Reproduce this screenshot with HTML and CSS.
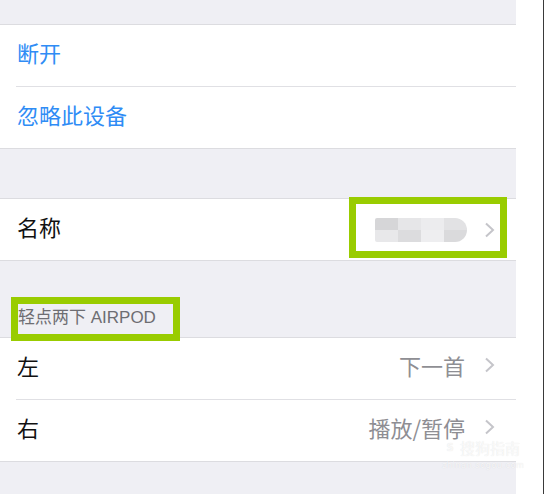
FILE: index.html
```html
<!DOCTYPE html>
<html>
	<head>
		<meta charset="utf-8">
		<title>AirPods</title>
		<link rel="stylesheet" href="styles.css">
	</head>
	<body>
		<div class="page">
			<div class="settings">
				<div class="gap gap-top"></div>
				<div class="group">
					<div class="row"><span class="action">断开</span></div>
					<div class="row"><span class="action">忽略此设备</span></div>
				</div>
				<div class="gap gap-mid"></div>
				<div class="group">
					<div class="row">
						<span class="label">名称</span>
						<span class="value">
							<span class="blur"><i></i><i></i><i></i><i></i><i></i><i></i><i></i><i></i></span>
							<svg class="chev" width="12" height="16" viewBox="0 0 12 16"><polyline points="3,1.5 10,8 3,14.5" fill="none" stroke="#c5c5ca" stroke-width="2"/></svg>
						</span>
					</div>
				</div>
				<div class="gap gap-head"><span class="head">轻点两下 AIRPOD</span></div>
				<div class="group">
					<div class="row">
						<span class="label">左</span>
						<span class="value">下一首
							<svg class="chev" width="12" height="16" viewBox="0 0 12 16"><polyline points="3,1.5 10,8 3,14.5" fill="none" stroke="#c5c5ca" stroke-width="2"/></svg>
						</span>
					</div>
					<div class="row">
						<span class="label">右</span>
						<span class="value">播放/暂停
							<svg class="chev" width="12" height="16" viewBox="0 0 12 16"><polyline points="3,1.5 10,8 3,14.5" fill="none" stroke="#c5c5ca" stroke-width="2"/></svg>
						</span>
					</div>
				</div>
				<div class="gap gap-end"></div>
			</div>
			<div class="side"></div>

			<!-- 标注框 -->
			<div class="mark mark-name"></div>
			<div class="mark mark-head"></div>

			<div class="watermark">
				<div class="wm-top"><span class="wm-logo">S</span>搜狗指南</div>
				<div class="wm-url">zhinan.sogou.com</div>
			</div>
		</div>
	</body>
</html>
```

FILE: styles.css
```css
*{margin: 0;padding: 0;box-sizing: border-box;}
body{
	background: #fff;
	font-family: "Noto Sans CJK SC", "Noto Sans", sans-serif;
}
.page{
	position: relative;
	display: flex;
	width: 544px;
	height: 494px;
	overflow: hidden;
}
.settings{
	width: 516px;
	background: #efeff4;
	display: flex;
	flex-direction: column;
}
.side{
	flex: 1;
	background: #fff;
	border-right: 1px solid #3a3a3a;
}
.gap-top{height: 24px;}
.gap-mid{height: 49px;}
.gap-head{
	height: 76px;
	display: flex;
	align-items: flex-end;
	padding: 0 0 9px 18px;
}
.gap-end{flex: 1;}
.head{
	font-family: "Liberation Sans", "Noto Sans CJK SC", sans-serif;
	font-size: 17px;
	line-height: 20px;
	color: #6d6d72;
}
.group{
	background: #fff;
	border-top: 1px solid #dcdce0;
	border-bottom: 1px solid #dcdce0;
}
.row{
	height: 61px;
	margin-left: 16px;
	padding: 0 21px 8px 1px;
	display: flex;
	align-items: center;
	justify-content: space-between;
	font-size: 22px;
	line-height: 24px;
}
.row + .row{
	border-top: 1px solid #e0e0e4;
	height: 62px;
}
.action{color: #2f8cf5;}
.label{color: #111;}
.value{
	display: flex;
	align-items: center;
	color: #8e8e93;
}
.chev{margin-left: 18px;}
.blur{
	display: grid;
	grid-template-columns: repeat(4, 23px);
	grid-template-rows: 12px 12px;
	width: 92px;
	height: 24px;
	margin-top: 8px;
	border-radius: 2px 12px 12px 2px;
	overflow: hidden;
	filter: blur(0.6px);
}
.blur i:nth-child(1){background: #d6d6d8;}
.blur i:nth-child(2){background: #e6e6e8;}
.blur i:nth-child(3){background: #ececee;}
.blur i:nth-child(4){background: #e2e2e4;}
.blur i:nth-child(5){background: #e8e8ea;}
.blur i:nth-child(6){background: #dcdcde;}
.blur i:nth-child(7){background: #eeeef0;}
.blur i:nth-child(8){background: #dadadc;}
.blur + .chev{margin-left: 16px;margin-top: 8px;}
.mark{
	position: absolute;
	border: 7px solid #99cc00;
}
.mark-name{
	left: 349px;
	top: 197px;
	width: 158px;
	height: 61px;
}
.mark-head{
	left: 11px;
	top: 297px;
	width: 169px;
	height: 44px;
}
.watermark{
	position: absolute;
	left: 442px;
	top: 440px;
	color: rgba(255,255,255,0.75);
	text-shadow: 0 0 1px rgba(0,0,0,0.12);
}
.wm-top{
	display: flex;
	align-items: center;
	font-size: 15px;
	line-height: 16px;
}
.wm-logo{
	width: 16px;
	height: 16px;
	border: 2px solid rgba(255,255,255,0.75);
	border-radius: 50%;
	font-family: "DejaVu Sans", sans-serif;
	font-size: 10px;
	font-weight: bold;
	line-height: 12px;
	text-align: center;
	margin-right: 2px;
}
.wm-url{
	font-family: "DejaVu Sans", sans-serif;
	font-size: 8px;
	letter-spacing: 0.6px;
	margin-top: 5px;
}
```
